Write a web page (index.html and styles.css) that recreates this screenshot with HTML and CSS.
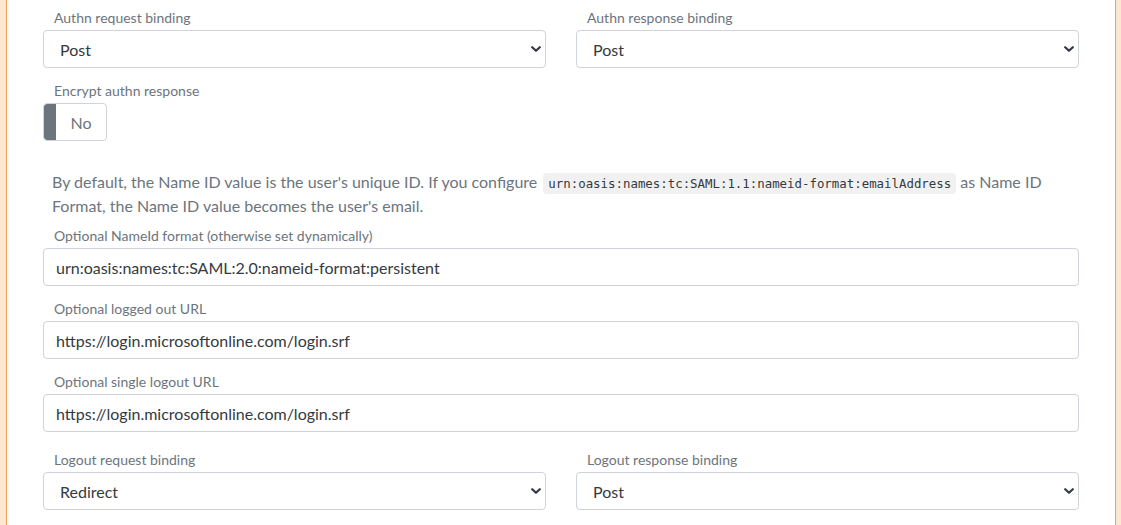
FILE: index.html
```html
<!DOCTYPE html>
<html>
<head>
<meta charset="utf-8">
<link rel="stylesheet" href="styles.css">
</head>
<body>
<div class="card">
  <div class="row">
    <div class="group">
      <label class="lbl">Authn request binding</label>
      <div class="select-wrap">
        <select class="ctl select"><option>Post</option></select>
        <svg class="chev" width="10" height="8" viewBox="0 0 10 8"><path d="M1.2 2.2 L5 5.8 L8.8 2.2" fill="none" stroke="#343a40" stroke-width="2.2" stroke-linecap="round" stroke-linejoin="round"/></svg>
      </div>
    </div>
    <div class="group">
      <label class="lbl">Authn response binding</label>
      <div class="select-wrap">
        <select class="ctl select"><option>Post</option></select>
        <svg class="chev" width="10" height="8" viewBox="0 0 10 8"><path d="M1.2 2.2 L5 5.8 L8.8 2.2" fill="none" stroke="#343a40" stroke-width="2.2" stroke-linecap="round" stroke-linejoin="round"/></svg>
      </div>
    </div>
  </div>
  <div class="group">
    <label class="lbl">Encrypt authn response</label>
    <div class="toggle"><span class="knob"></span><span class="toggle-text">No</span></div>
  </div>
  <p class="help">By default, the Name ID value is the user's unique ID. If you configure <code>urn:oasis:names:tc:SAML:1.1:nameid-format:emailAddress</code> as Name ID Format, the Name ID value becomes the user's email.</p>
  <div class="group">
    <label class="lbl">Optional NameId format (otherwise set dynamically)</label>
    <input class="ctl input" type="text" value="urn:oasis:names:tc:SAML:2.0:nameid-format:persistent">
  </div>
  <div class="group">
    <label class="lbl">Optional logged out URL</label>
    <input class="ctl input" type="text" value="https://login.microsoftonline.com/login.srf">
  </div>
  <div class="group">
    <label class="lbl">Optional single logout URL</label>
    <input class="ctl input" type="text" value="https://login.microsoftonline.com/login.srf">
  </div>
  <div class="row row-gap">
    <div class="group">
      <label class="lbl">Logout request binding</label>
      <div class="select-wrap">
        <select class="ctl select"><option>Redirect</option></select>
        <svg class="chev" width="10" height="8" viewBox="0 0 10 8"><path d="M1.2 2.2 L5 5.8 L8.8 2.2" fill="none" stroke="#343a40" stroke-width="2.2" stroke-linecap="round" stroke-linejoin="round"/></svg>
      </div>
    </div>
    <div class="group">
      <label class="lbl">Logout response binding</label>
      <div class="select-wrap">
        <select class="ctl select"><option>Post</option></select>
        <svg class="chev" width="10" height="8" viewBox="0 0 10 8"><path d="M1.2 2.2 L5 5.8 L8.8 2.2" fill="none" stroke="#343a40" stroke-width="2.2" stroke-linecap="round" stroke-linejoin="round"/></svg>
      </div>
    </div>
  </div>
</div>
</body>
</html>
```
FILE: styles.css
```css
html, body {
  margin: 0;
  padding: 0;
  overflow: hidden;
  background: #ffffff;
}
body {
  font-family: Lato, "Liberation Sans", sans-serif;
  color: #495057;
}
.card {
  margin: 0 5px 0 6px;
  border: 1px solid #f4a050;
  border-top: 0;
  box-shadow: 0 0 0 6px #fde7d3;
  padding: 8px 36px 40px 36px;
  min-height: 600px;
  background: #fff;
}
.row {
  display: grid;
  grid-template-columns: 1fr 1fr;
  column-gap: 30px;
}
.row-gap {
  margin-top: 18px;
}
.group {
  display: flex;
  flex-direction: column;
  margin-bottom: 13px;
}
.lbl {
  font-size: 14px;
  line-height: 20px;
  color: #6c757d;
  padding-left: 11px;
  margin-bottom: 2px;
}
.ctl {
  box-sizing: border-box;
  height: 38px;
  width: 100%;
  border: 1px solid #ced4da;
  border-radius: 4px;
  background: #fff;
  font-family: Lato, "Liberation Sans", sans-serif;
  font-size: 16px;
  color: #343a40;
  margin: 0;
  outline: none;
}
.input {
  padding: 0 12px;
}
.select-wrap {
  position: relative;
}
.select {
  -webkit-appearance: none;
  appearance: none;
  padding: 0 30px 0 16px;
}
.chev {
  position: absolute;
  right: 5px;
  top: 15px;
  pointer-events: none;
}
.toggle {
  box-sizing: border-box;
  width: 64px;
  height: 38px;
  border: 1px solid #ced4da;
  border-radius: 4px;
  display: flex;
  align-items: stretch;
  overflow: hidden;
}
.knob {
  width: 12px;
  background: #6c757d;
  border-radius: 3px 0 0 3px;
}
.toggle-text {
  flex: 1;
  display: flex;
  align-items: center;
  justify-content: center;
  font-size: 16px;
  color: #6c757d;
}
.help {
  margin: 29px 0 8px 9px;
  font-size: 16px;
  line-height: 24px;
  height: 48px;
  color: #6c757d;
}
code {
  font-family: "DejaVu Sans Mono", "Liberation Mono", monospace;
  font-size: 12.4px;
  line-height: 1;
  background: #f1f1f1;
  color: #343a40;
  border-radius: 4px;
  padding: 3px 5px;
  margin-left: 2px;
}
```
